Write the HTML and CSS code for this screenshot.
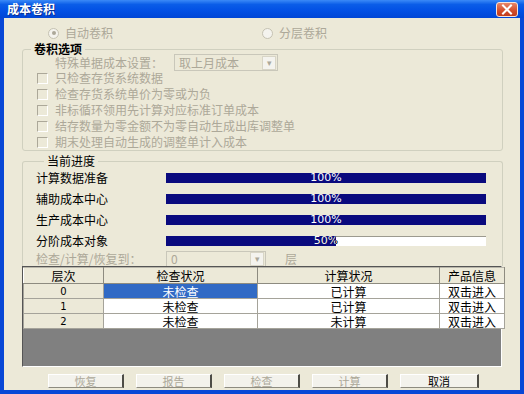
FILE: index.html
```html
<!DOCTYPE html>
<html lang="zh-CN">
  <head>
    <meta charset="UTF-8" />
    <title>成本卷积</title>
    <link rel="stylesheet" href="styles.css">
  </head>
  <body>
    <div class="win">
      <div class="titlebar">
        <span class="title">成本卷积</span>
        <span class="close">
          <svg width="12" height="11" viewBox="0 0 12 11">
            <path d="M2 1.5 L10 9.5 M10 1.5 L2 9.5" stroke="#fff" stroke-width="2" stroke-linecap="square" />
          </svg>
        </span>
      </div>
      <div class="client">
        <div class="radios">
          <label class="radio first"><span class="dot on"></span>自动卷积</label>
          <label class="radio"><span class="dot"></span>分层卷积</label>
        </div>

        <fieldset class="group opts">
          <legend class="bold">卷积选项</legend>
          <div class="setting">
            <span class="setting-label">特殊单据成本设置：</span>
            <div class="combo wide"><span>取上月成本</span><i class="arrow">▾</i></div>
          </div>
          <div class="check"><span class="box"></span>只检查存货系统数据</div>
          <div class="check"><span class="box"></span>检查存货系统单价为零或为负</div>
          <div class="check"><span class="box"></span>非标循环领用先计算对应标准订单成本</div>
          <div class="check"><span class="box"></span>结存数量为零金额不为零自动生成出库调整单</div>
          <div class="check"><span class="box"></span>期末处理自动生成的调整单计入成本</div>
        </fieldset>

        <fieldset class="group progress">
          <legend>当前进度</legend>
          <div class="prow">
            <span class="plabel">计算数据准备</span>
            <div class="bar"><div class="bar-fill" style="width:100%"></div><span class="bar-text on">100%</span></div>
          </div>
          <div class="prow">
            <span class="plabel">辅助成本中心</span>
            <div class="bar"><div class="bar-fill" style="width:100%"></div><span class="bar-text on">100%</span></div>
          </div>
          <div class="prow">
            <span class="plabel">生产成本中心</span>
            <div class="bar"><div class="bar-fill" style="width:100%"></div><span class="bar-text on">100%</span></div>
          </div>
          <div class="prow">
            <span class="plabel">分阶成本对象</span>
            <div class="bar"><div class="bar-fill" style="width:53%"></div><span class="bar-text">50%</span><span class="bar-text on" style="clip-path:inset(0 47% 0 0)">50%</span></div>
          </div>
          <div class="restore">
            <span class="plabel muted">检查/计算/恢复到：</span>
            <div class="combo small"><span>0</span><i class="arrow">▾</i></div>
            <span class="muted layer">层</span>
          </div>
        </fieldset>

        <div class="grid">
          <table>
            <thead>
              <tr><th class="c1">层次</th><th class="c2">检查状况</th><th class="c3">计算状况</th><th class="c4">产品信息</th></tr>
            </thead>
            <tbody>
              <tr><td class="rowhead num">0</td><td class="sel">未检查</td><td>已计算</td><td>双击进入</td></tr>
              <tr><td class="rowhead num">1</td><td>未检查</td><td>已计算</td><td>双击进入</td></tr>
              <tr><td class="rowhead num">2</td><td>未检查</td><td>未计算</td><td>双击进入</td></tr>
            </tbody>
          </table>
        </div>

        <div class="buttons">
          <button class="btn" disabled>恢复</button>
          <button class="btn" disabled>报告</button>
          <button class="btn" disabled>检查</button>
          <button class="btn" disabled>计算</button>
          <button class="btn cancel">取消</button>
        </div>
      </div>
    </div>
  </body>
</html>
```

FILE: styles.css
```css
body {
  margin: 0;
  font-family: "Noto Sans CJK SC", "Liberation Sans", sans-serif;
  font-size: 12px;
  background: #fff;
}

.win {
  width: 524px;
  height: 394px;
  display: flex;
  flex-direction: column;
  background: #0847d6;
}

.titlebar {
  height: 18px;
  flex: 0 0 18px;
  display: flex;
  align-items: center;
  justify-content: space-between;
  padding: 0 6px 0 7px;
  background: linear-gradient(#3b8af7 0%, #0a5de8 25%, #0250e4 60%, #0046d6 100%);
}

.title {
  color: #fff;
  font-weight: bold;
  font-size: 12px;
  line-height: 18px;
  text-shadow: 1px 1px 0 #0b2f8e;
}

.close {
  width: 20px;
  height: 13px;
  border: 1px solid #f4e4dc;
  border-radius: 3px;
  background: linear-gradient(#e8876a, #d24c2a 60%, #c03d1e);
  display: flex;
  align-items: center;
  justify-content: center;
}

.client {
  flex: 1;
  margin: 0 4px 4px 4px;
  background: #ece9d8;
  padding: 0 17px 0 18px;
  display: flex;
  flex-direction: column;
  color: #000;
}

.muted {
  color: #aca899;
}

/* radios */
.radios {
  display: flex;
  padding: 8px 0 0 26px;
  height: 14px;
}

.radio {
  display: flex;
  align-items: center;
  gap: 6px;
  color: #aca899;
  line-height: 14px;
}

.radio.first {
  width: 214px;
}

.dot {
  width: 9px;
  height: 9px;
  border: 1px solid #c5c2b2;
  border-radius: 50%;
  background: #f4f3ee;
  display: flex;
  align-items: center;
  justify-content: center;
}

.dot.on::after {
  content: "";
  width: 4px;
  height: 4px;
  border-radius: 50%;
  background: #aca899;
}

/* group boxes */
.group {
  margin: 0;
  padding: 0;
  border: 1px solid #d0d0bf;
  border-radius: 3px;
  min-width: 0;
}

.group legend {
  margin-left: 8px;
  padding: 0 3px;
  line-height: 12px;
  font-size: 12px;
  color: #000;
}

.group legend.bold {
  font-weight: bold;
}

.opts {
  margin-top: 3px;
}

.setting {
  display: flex;
  align-items: center;
  height: 15px;
  padding-left: 32px;
  color: #aca899;
}

.setting-label {
  width: 119px;
}

.combo {
  height: 16px;
  box-sizing: border-box;
  border: 1px solid #c9c7ba;
  background: #ece9d8;
  display: flex;
  align-items: center;
  justify-content: space-between;
  color: #aca899;
  padding-left: 4px;
  line-height: 14px;
}

.combo.wide {
  width: 104px;
  height: 17px;
}

.combo.small {
  width: 100px;
}

.arrow {
  font-style: normal;
  width: 12px;
  height: 12px;
  margin-right: 1px;
  border: 1px solid #d8d5c6;
  background: #f4f3ee;
  font-size: 9px;
  line-height: 12px;
  text-align: center;
  color: #aca899;
}

.check {
  display: flex;
  align-items: center;
  height: 16px;
  padding-left: 14px;
  gap: 7px;
  color: #aca899;
  line-height: 14px;
}

.box {
  width: 9px;
  height: 9px;
  border-top: 1px solid #aca899;
  border-left: 1px solid #aca899;
  border-right: 1px solid #fff;
  border-bottom: 1px solid #fff;
  background: #ece9d8;
}

/* progress */
.progress {
  margin-top: 4px;
  border-bottom: none;
  border-bottom-left-radius: 0;
  border-bottom-right-radius: 0;
  padding-left: 13px;
}

.prow {
  display: flex;
  align-items: center;
  height: 21px;
}

.plabel {
  width: 130px;
  line-height: 14px;
}

.bar {
  position: relative;
  width: 320px;
  height: 10px;
  background: #fff;
  box-shadow: inset 0 1px 0 #9c9a8f;
}

.bar-fill {
  height: 10px;
  background: #0a0a7e;
}

.bar-text {
  position: absolute;
  left: 0;
  top: -1px;
  width: 320px;
  text-align: center;
  font: 11px/12px "DejaVu Sans", sans-serif;
  color: #000;
}

.bar-text.on {
  color: #fff;
}

.restore {
  display: flex;
  align-items: center;
  height: 15px;
}

.layer {
  margin-left: 19px;
}

/* grid */
.grid {
  width: 480px;
  height: 101px;
  box-sizing: border-box;
  background: #808080;
  border-top: 1px solid #555;
  border-left: 1px solid #555;
  border-right: 1px solid #fff;
  border-bottom: 1px solid #fff;
}

table {
  border-collapse: collapse;
  table-layout: fixed;
  width: 477px;
}

th,
td {
  border: 1px solid #a5a39a;
  text-align: center;
  font-weight: normal;
  line-height: 13px;
  height: 14px;
  padding: 0;
  background: #fff;
}

th {
  height: 15px;
  background: #ece9d8;
  border-color: #b8b6aa #8d8b80 #8d8b80 #fff;
}

th.c1 { width: 79px; }
th.c2 { width: 153px; }
th.c3 { width: 181px; }
th.c4 { width: 64px; }

td.rowhead {
  background: #ece9d8;
}

.num {
  font-family: "DejaVu Sans", sans-serif;
  font-size: 10px;
}

td.sel {
  background: #316ac5;
  color: #fff;
}

/* buttons */
.buttons {
  display: flex;
  gap: 12px;
  margin-top: 7px;
  padding-left: 26px;
}

.btn {
  width: 76px;
  height: 14px;
  padding: 0;
  font-family: "Noto Sans CJK SC", sans-serif;
  font-size: 11px;
  line-height: 12px;
  background: #f3f2ec;
  border: 1px solid;
  border-color: #fff #4d4c46 #8d8b80 #fff;
  border-right-width: 2px;
  color: #aca899;
}

.btn.cancel {
  width: 79px;
  color: #000;
}
```
